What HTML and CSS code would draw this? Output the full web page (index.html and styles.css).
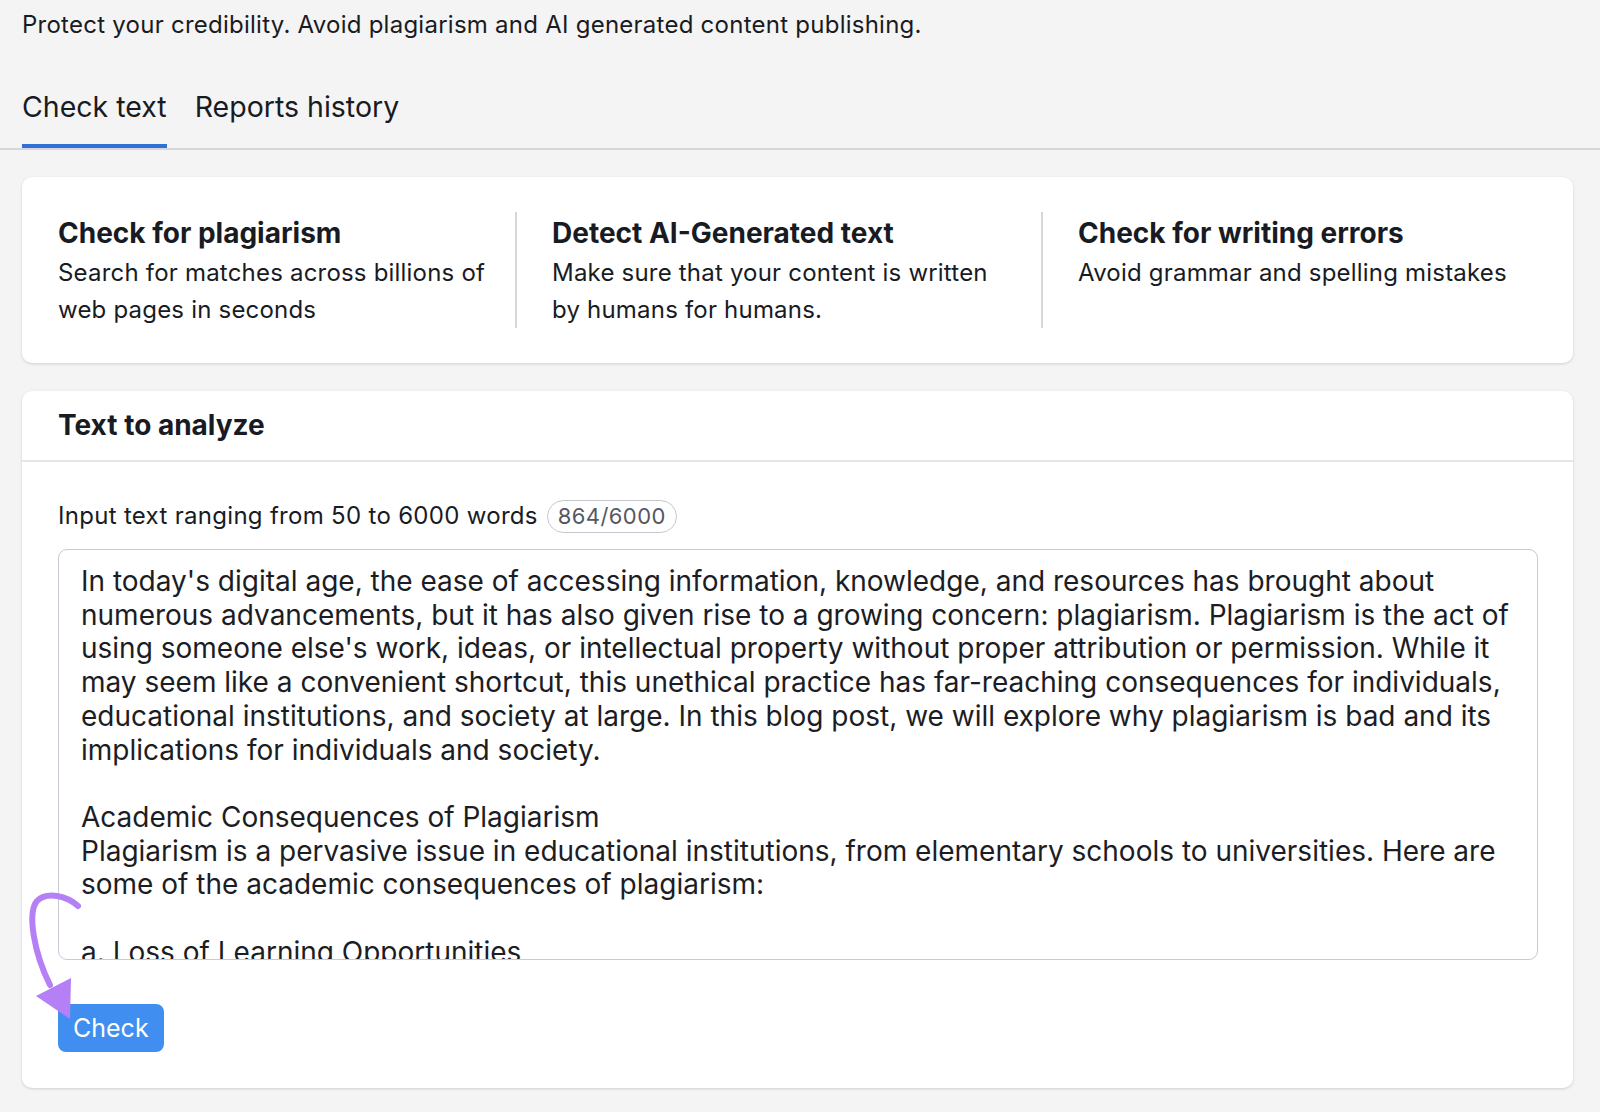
FILE: index.html
```html
<!DOCTYPE html>
<html lang="en">
<head>
    <meta charset="UTF-8">
    <meta name="viewport" content="width=device-width, initial-scale=1.0">
    <title>Plagiarism Checker</title>
    <link rel="stylesheet" href="styles.css">
</head>
<body>
    <header class="top">
        <p class="tagline">Protect your credibility. Avoid plagiarism and AI generated content publishing.</p>
        <nav class="tabs">
            <a class="tab active">Check text</a>
            <a class="tab">Reports history</a>
        </nav>
    </header>

    <main class="main">
        <section class="card features">
            <div class="feature">
                <h3>Check for plagiarism</h3>
                <p>Search for matches across billions of web pages in seconds</p>
            </div>
            <div class="feature">
                <h3>Detect AI-Generated text</h3>
                <p>Make sure that your content is written by humans for humans.</p>
            </div>
            <div class="feature">
                <h3>Check for writing errors</h3>
                <p>Avoid grammar and spelling mistakes</p>
            </div>
        </section>

        <section class="card analyze">
            <div class="card-header">
                <h2>Text to analyze</h2>
            </div>
            <div class="card-body">
                <div class="hint">
                    <span>Input text ranging from 50 to 6000 words</span>
                    <span class="counter">864/6000</span>
                </div>
                <div class="text-input">
                    <div class="line">In today's digital age, the ease of accessing information, knowledge, and resources has brought about</div>
                    <div class="line">numerous advancements, but it has also given rise to a growing concern: plagiarism. Plagiarism is the act of</div>
                    <div class="line">using someone else's work, ideas, or intellectual property without proper attribution or permission. While it</div>
                    <div class="line">may seem like a convenient shortcut, this unethical practice has far-reaching consequences for individuals,</div>
                    <div class="line">educational institutions, and society at large. In this blog post, we will explore why plagiarism is bad and its</div>
                    <div class="line">implications for individuals and society.</div>
                    <div class="line">&nbsp;</div>
                    <div class="line">Academic Consequences of Plagiarism</div>
                    <div class="line">Plagiarism is a pervasive issue in educational institutions, from elementary schools to universities. Here are</div>
                    <div class="line">some of the academic consequences of plagiarism:</div>
                    <div class="line">&nbsp;</div>
                    <div class="line">a. Loss of Learning Opportunities</div>
                </div>
                <button class="check-btn">Check</button>
            </div>

            <!-- annotation arrow pointing at the button -->
            <svg class="arrow" width="80" height="140" viewBox="0 0 80 140">
                <path d="M56,23 C45,13 25,8 15,18 C5,30 12,70 28,102" fill="none" stroke="#b57ff5" stroke-width="6" stroke-linecap="round"/>
                <polygon points="14,113 49,95 48,136" fill="#b57ff5"/>
            </svg>
        </section>
    </main>
</body>
</html>
```

FILE: styles.css
```css
body {
    margin: 0;
    padding: 0;
    background-color: #f4f4f4;
    color: #191b23;
    font-family: Inter, "Noto Sans", Arial, sans-serif;
}
.top {
    padding: 8px 0 0;
    border-bottom: 2px solid #d6d7dc;
}
.tagline {
    margin: 0 22px;
    font-size: 24px;
    letter-spacing: 0.25px;
    line-height: 34px;
}
.tabs {
    display: flex;
    gap: 28px;
    margin: 48px 22px 0;
}
.tab {
    font-size: 28.5px;
    line-height: 34px;
    padding-bottom: 20px;
    border-bottom: 4px solid transparent;
    color: #191b23;
}
.tab.active {
    border-bottom-color: #2f6fd6;
}
.main {
    padding: 27px 27px 25px 22px;
}
.card {
    background: white;
    border-radius: 10px;
    box-shadow: 0 1px 3px rgba(0,0,0,0.15);
}
.features {
    display: grid;
    grid-template-columns: 457px 526px 1fr;
    padding: 35px 36px 35px;
    margin-bottom: 28px;
}
.feature {
    padding-top: 3px;
}
.feature + .feature {
    border-left: 2px solid #d6d7dc;
    padding-left: 35px;
}
.feature h3 {
    margin: 0 0 3px;
    font-size: 28px;
    line-height: 36px;
    font-weight: 700;
}
.feature p {
    margin: 0;
    max-width: 455px;
    font-size: 24px;
    letter-spacing: 0.2px;
    line-height: 37px;
}
.analyze {
    position: relative;
}
.card-header {
    padding: 16px 36px 17px;
    border-bottom: 2px solid #e4e5ea;
}
.card-header h2 {
    margin: 0;
    font-size: 28px;
    line-height: 36px;
    font-weight: 700;
}
.card-body {
    padding: 37px 35px 36px 36px;
}
.hint {
    display: flex;
    align-items: center;
    gap: 9px;
    font-size: 24px;
    letter-spacing: 0.3px;
    line-height: 34px;
}
.counter {
    border: 1.5px solid #c6c7ce;
    border-radius: 17px;
    padding: 0 10px;
    height: 31px;
    line-height: 31px;
    color: #555861;
    font-size: 22px;
    letter-spacing: 0.4px;
}
.text-input {
    margin-top: 16px;
    height: 394px;
    padding: 15px 22px 0;
    border: 1.5px solid #c8c9d4;
    border-radius: 9px;
    overflow: hidden;
    font-size: 28px;
    line-height: 33.7px;
    color: #1c1d24;
    white-space: nowrap;
}
.check-btn {
    margin-top: 44px;
    background-color: #3f8ef0;
    color: white;
    border: none;
    border-radius: 8px;
    height: 48px;
    padding: 0 15px;
    font-family: inherit;
    font-size: 25px;
    cursor: pointer;
}
.check-btn:hover {
    background-color: #2f7ce0;
}
.arrow {
    position: absolute;
    left: 0;
    top: 492px;
    overflow: visible;
}
```
